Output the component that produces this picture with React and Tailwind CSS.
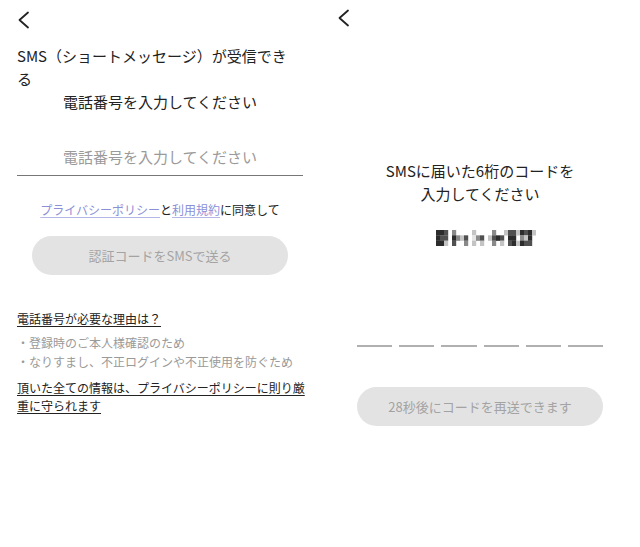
const font = { fontFamily: '"Noto Sans CJK JP", "Noto Sans", sans-serif' };

function Back({ className }) {
  return (
    <svg width="14" height="18" viewBox="0 0 14 18" className={className}>
      <polyline points="11,1.5 2.5,9 11,16.5" fill="none" stroke="#222" strokeWidth="1.8" strokeLinecap="round" strokeLinejoin="round" />
    </svg>
  );
}

// pixelated (mosaic) phone number, column by column (top, middle, bottom)
const cols = [
  "aaa", "aba", "bbd", "...", "cab", ".c.", ".d.", ".bc", "...", "ded", ".c.", ".bd", "...",
  ".d.", "cbc", ".a.", ".bd", "d..", "bab", "baa", "d.d", "aca", "bdb", "aab", "d..",
];
const shades = { a: "#2c2c2c", b: "#505050", c: "#8a8a8a", d: "#c4c4c4", e: "#e4e4e4" };

function Mosaic() {
  return (
    <svg width="100" height="16" viewBox="0 0 100 16">
      {cols.map((col, c) =>
        col.split("").map((ch, r) =>
          ch === "." ? null : (
            <rect key={c + "-" + r} x={c * 4} y={r * 5.33} width="4.2" height="5.5" fill={shades[ch]} />
          )
        )
      )}
    </svg>
  );
}

export default function App() {
  return (
    <div className="flex w-[640px] h-[547px] bg-white text-[#222]" style={font}>
      {/* left: phone number */}
      <div className="w-[320px] px-[17px]">
        <Back className="mt-[11px]" />
        <div className="mt-[15px] text-[15px] leading-[23px]">
          SMS（ショートメッセージ）が受信でき
          <br />る
        </div>
        <div className="text-[15px] leading-[23px] text-center">電話番号を入力してください</div>
        <div className="mt-[26px] h-[37px] flex items-center justify-center border-b border-[#777] text-[15px] text-[#9a9a9a]">
          電話番号を入力してください
        </div>
        <div className="mt-[25px] text-[12px] leading-[18px] text-center">
          <span className="text-[#8b8fd6] underline underline-offset-2 decoration-[#b5b8e6]">プライバシーポリシー</span>と
          <span className="text-[#8b8fd6] underline underline-offset-2 decoration-[#b5b8e6]">利用規約</span>に同意して
        </div>
        <div className="mt-[17px] mx-[15px] h-[39px] rounded-full bg-[#e3e3e3] flex items-center justify-center text-[13px] text-[#a3a3a3]">
          認証コードをSMSで送る
        </div>
        <div className="mt-[35px] text-[12px] leading-[18px] underline underline-offset-2">電話番号が必要な理由は？</div>
        <div className="mt-[5px] text-[12px] leading-[19px] text-[#9a9a9a]">
          <div>・登録時のご本人様確認のため</div>
          <div>・なりすまし、不正ログインや不正使用を防ぐため</div>
        </div>
        <div className="mt-[8px] text-[12px] leading-[18px] underline underline-offset-2 whitespace-nowrap">
          頂いた全ての情報は、プライバシーポリシーに則り厳
          <br />
          重に守られます
        </div>
      </div>

      {/* right: code entry */}
      <div className="w-[320px] px-[37px]">
        <Back className="mt-[9px] -ml-[20px]" />
        <div className="mt-[132px] text-[15px] leading-[23px] text-center">
          SMSに届いた6桁のコードを
          <br />
          入力してください
        </div>
        <div className="mt-[25px] flex justify-center pl-[12px]">
          <Mosaic />
        </div>
        <div className="mt-[99px] flex gap-[7px]">
          {[0, 1, 2, 3, 4, 5].map((i) => (
            <div key={i} className="flex-1 h-[2px] bg-[#b0b0b0]" />
          ))}
        </div>
        <div className="mt-[40px] h-[39px] rounded-full bg-[#e3e3e3] flex items-center justify-center text-[13px] text-[#a3a3a3]">
          28秒後にコードを再送できます
        </div>
      </div>
    </div>
  );
}
